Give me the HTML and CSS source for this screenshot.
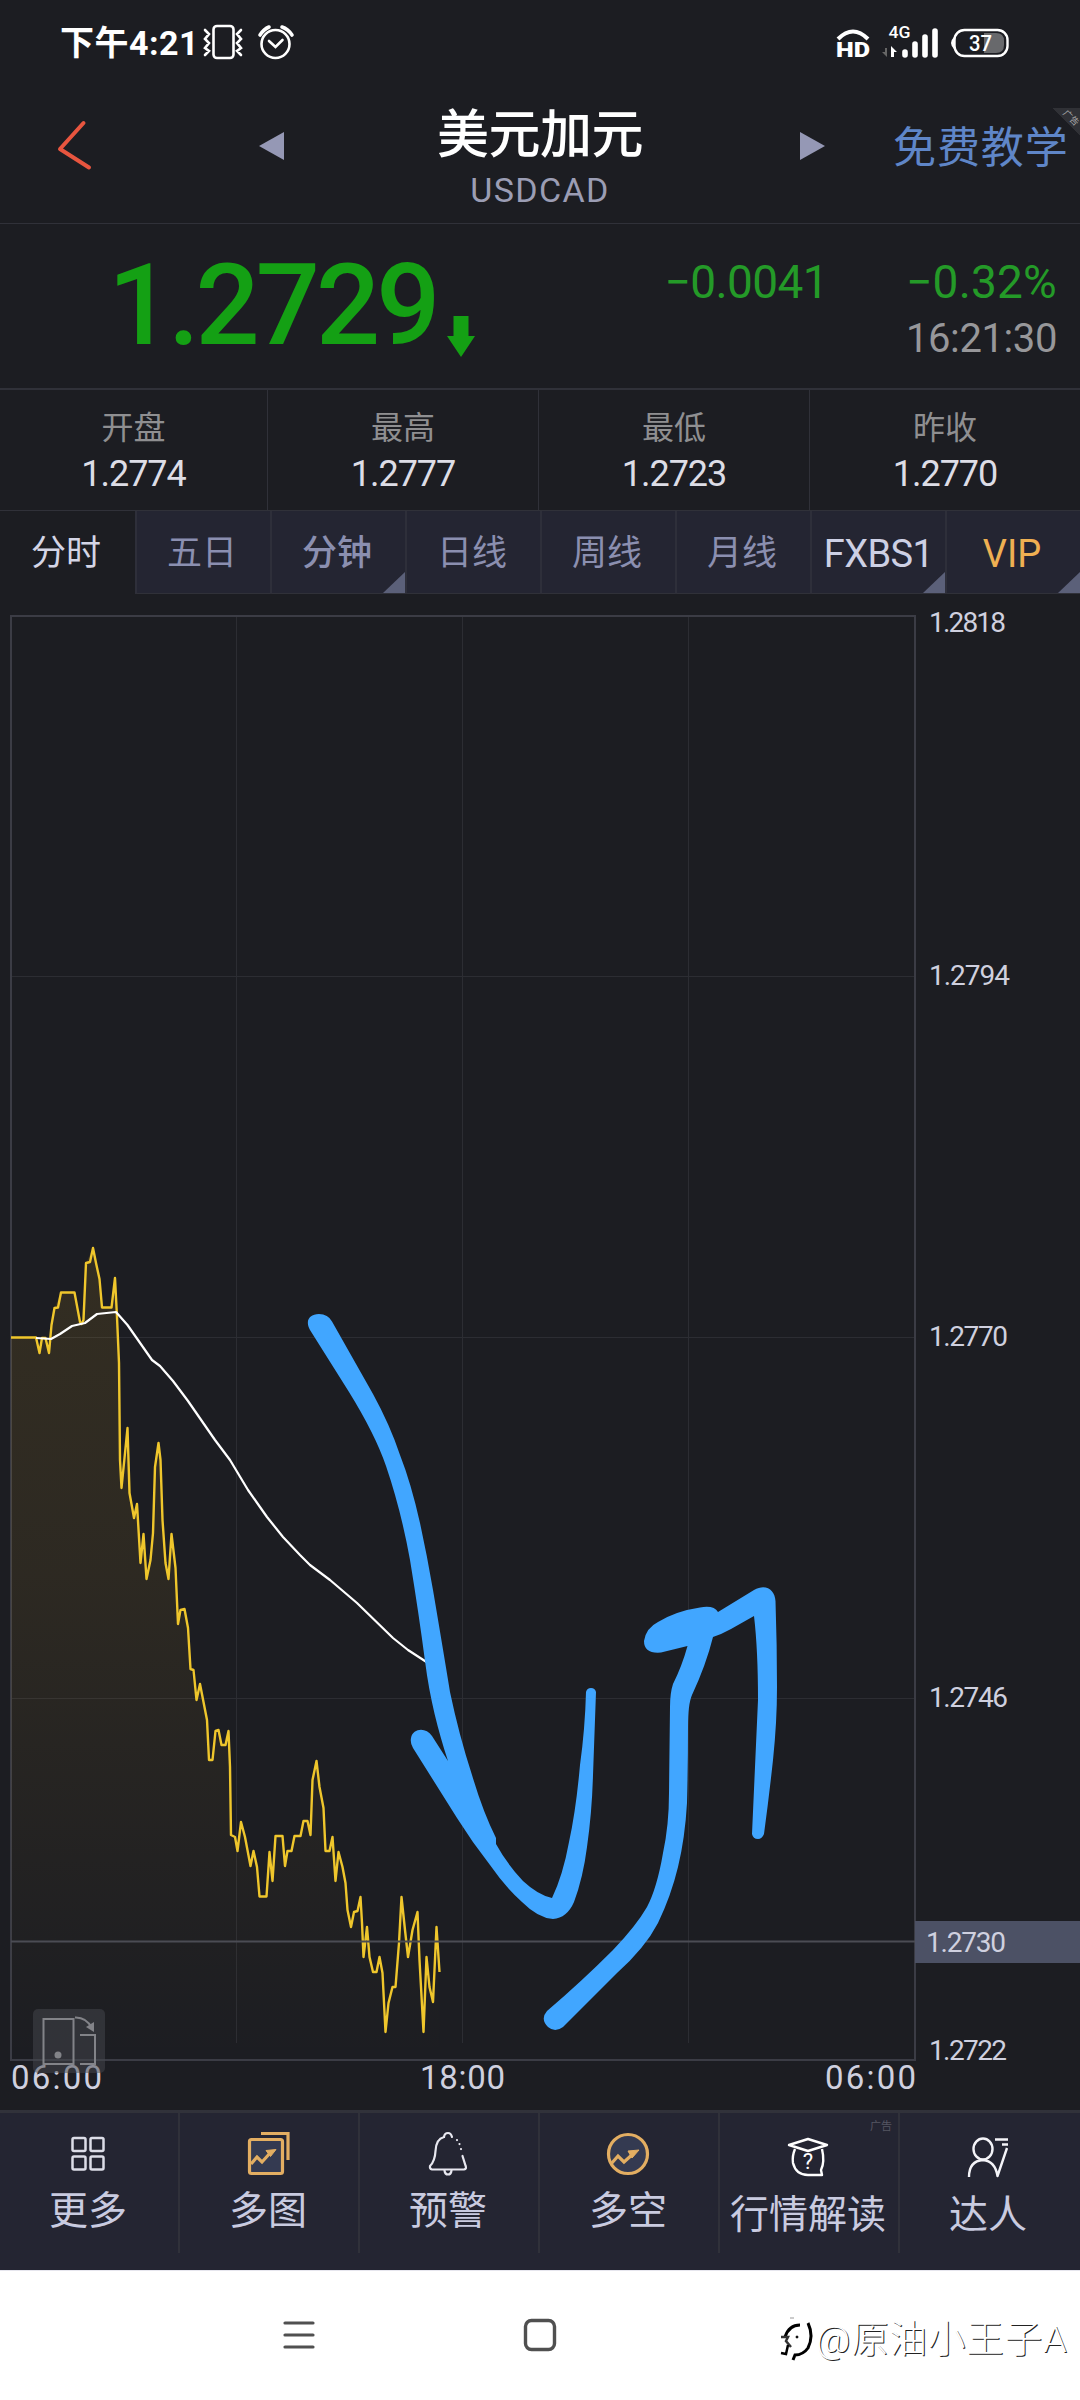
FILE: index.html
```html
<!DOCTYPE html>
<html lang="zh-CN">
<head>
<meta charset="utf-8">
<title>美元加元 USDCAD</title>
<link rel="stylesheet" href="styles.css">
</head>
<body>

<div class="status">
	<span class="clock">下午4:21</span>
	<svg class="status-left" width="94" height="40" viewBox="202 22 94 40">
		<g fill="none" stroke="#fff" stroke-width="2.6" stroke-linecap="round">
			<rect x="213.500" y="26" width="20" height="32" rx="3.500"/>
			<path d="M205 30l4 4-4 5 4 4-4 5 4 3-4 4M241 30l-4 4 4 5-4 4 4 5-4 3 4 4"/>
			<circle cx="275.500" cy="44" r="14"/>
			<path d="M269 41l6.500 6 7-7"/>
			<path d="M260 35q4-6 9-8M282 27q6 2 10 8" stroke-width="3.600"/>
		</g>
	</svg>
	<svg class="status-right" width="180" height="40" viewBox="834 22 180 40">
		<path d="M838 39q15-15 30 0" fill="none" stroke="#fff" stroke-width="4"/>
		<text x="836" y="57" class="hd" textLength="34" lengthAdjust="spacingAndGlyphs">HD</text>
		<text x="888.500" y="38" class="net" textLength="22" lengthAdjust="spacingAndGlyphs">4G</text>
		<path d="M887 48v9l-5-5h3v-4z" fill="#666"/>
		<path d="M891 57V46l6 6h-3v5z" fill="#fff"/>
		<path d="M905 52v3M915 44v11M925 37v18M935 31v24" stroke="#fff" stroke-width="5.600" stroke-linecap="round"/>
		<path d="M954 37q-6 6 0 12z" fill="#fff"/>
		<path d="M984 33h12q8 0 8 8v4q0 8-8 8h-12z" fill="#68696c"/>
		<rect x="954.500" y="30" width="53" height="26" rx="10" fill="none" stroke="#fff" stroke-width="2.400"/>
		<text x="969" y="51" class="bat" textLength="23" lengthAdjust="spacingAndGlyphs">37</text>
	</svg>
</div>

<div class="header">
	<svg class="back" width="40" height="60" viewBox="54 119 40 60">
		<path d="M83.500 128L60 154l29 18.500" transform="translate(0 -5)" fill="none" stroke="#e8553f" stroke-width="4" stroke-linecap="round" stroke-linejoin="round"/>
	</svg>
	<svg class="prev" width="26" height="30" viewBox="0 0 26 30"><path d="M0 15L25 1v28z" fill="#9598b5"/></svg>
	<div class="title">
		<div class="name">美元加元</div>
		<div class="code">USDCAD</div>
	</div>
	<svg class="next" width="26" height="30" viewBox="0 0 26 30"><path d="M25 15L0 1v28z" fill="#9598b5"/></svg>
	<div class="teach">免费教学</div>
	<div class="corner"><span>广告</span></div>
</div>

<div class="quote">
	<div class="price">1.2729</div>
	<svg class="down" width="28" height="41" viewBox="0 0 28 41"><path d="M6.500 0h15v20h6.500L14 41 0 20h6.500z" fill="#14a014"/></svg>
	<div class="diff">−0.0041</div>
	<div class="percent">
		<div class="rate">−0.32%</div>
		<div class="time">16:21:30</div>
	</div>
</div>

<div class="stats">
	<div class="stat"><span>开盘</span><b>1.2774</b></div>
	<div class="stat"><span>最高</span><b>1.2777</b></div>
	<div class="stat"><span>最低</span><b>1.2723</b></div>
	<div class="stat"><span>昨收</span><b>1.2770</b></div>
</div>

<div class="tabs">
	<div class="tab active">分时</div>
	<div class="tab">五日</div>
	<div class="tab bold more">分钟</div>
	<div class="tab">日线</div>
	<div class="tab">周线</div>
	<div class="tab">月线</div>
	<div class="tab light more">FXBS1</div>
	<div class="tab vip more">VIP</div>
</div>

<div class="chart">
<svg width="1080" height="1516" viewBox="0 594 1080 1516">
	<defs>
		<linearGradient id="area" gradientUnits="userSpaceOnUse" x1="0" y1="1248" x2="0" y2="2060">
			<stop offset="0" stop-color="#f0b420" stop-opacity=".11"/>
			<stop offset=".4" stop-color="#f0b420" stop-opacity=".08"/>
			<stop offset="1" stop-color="#f0b420" stop-opacity="0"/>
		</linearGradient>
	</defs>

	<!-- grid -->
	<path d="M236.500 617V2043M462.500 617V2043M688.500 617V2043M11 976.500H915M11 1337.500H915M11 1698.500H915" stroke="#2c2d33" fill="none"/>
	<rect x="11" y="616" width="904" height="1444" fill="none" stroke="#3b3c45" stroke-width="2"/>

	<!-- price area, price line and average line -->
	<path fill="url(#area)" d="M11 1337.500H36L39.500 1353 42 1338H45.500L49 1353 51.500 1325 54.500 1308 61 1292.500H74.500L81.500 1324 86 1263 93 1248 99.500 1279 102 1307.500H111.500L115 1278 119 1363 121.500 1488 127.500 1428 129.500 1493 134 1518 137 1504 140.500 1563 143.500 1534 146.500 1579 153 1533 155 1467 158.500 1443 162.500 1520 168.500 1579 171.500 1534 178 1624 184.500 1609 190.500 1669 196.500 1700 200 1684 207 1720 209 1760H212.500L215.500 1731 221.500 1745 228.500 1731 231 1833 237.500 1851 241 1822 250.500 1866 253.500 1851 259.500 1896H266.500L269.500 1852 272.500 1881 275.500 1836H282.500L285 1866 291.500 1851 294.500 1836H300.500L307.500 1821 310.500 1835 312.500 1780 316.500 1761 323.500 1808 325.500 1851 332.500 1837 335.500 1881 338.500 1852 345.500 1883 351 1927 360.500 1897 363.500 1957 367 1927 373 1972 379.500 1957 385.500 2032 392.500 1987 399 1943 401.500 1897 408 1957 417.500 1912 423.500 2032 426.500 1957 433 2002 436.500 1927 439.500 1972V2060H11z"/>
	<path class="price-line" d="M11 1337.500H36L39.500 1353 42 1338H45.500L49 1353 51.500 1325 54.500 1308 58 1307.500 61 1292.500H74.500L80 1322 81.500 1324 83.500 1320 86 1263 90 1262 93 1248 96 1263 99.500 1279 102 1307.500H111.500L115 1278 117 1317 119 1363 120 1460 121.500 1488 124.500 1458 127.500 1428 129.500 1493 134 1518 137 1504 140.500 1563 143.500 1534 146.500 1579 150.500 1560 153 1533 155 1467 158.500 1443 160.500 1460 162.500 1520 165.500 1563 168.500 1579 171.500 1534 175.500 1568 178 1624 180.500 1610 184.500 1609 188 1628 190.500 1669 193.500 1670 196.500 1700 200 1684 203.500 1702 207 1720 209 1760H212.500L215.500 1731 218.500 1730 221.500 1745H225.500L228.500 1731 230 1767 231 1835 235 1837 237.500 1851 241 1822 245 1837 250.500 1866 253.500 1851 257 1867 259.500 1896.500H266.500L269.500 1852 272.500 1881 275.500 1836H282.500L285 1866 287.500 1851H291.500L294.500 1836H300.500L303.500 1821H307.500L310.500 1835 312.500 1780 316.500 1761 319.500 1787 323.500 1808 325.500 1851H329.500L332.500 1837 335.500 1881 338.500 1852 342.500 1867 345.500 1883 347.500 1910 351 1927 354 1912 357.500 1911 360.500 1897 362 1923 363.500 1957 367 1927 369.500 1957 373 1972H376.500L379.500 1957 382.500 1973 385.500 2032 388.500 2003 392.500 1987H395.500L399 1943 401.500 1897 405 1930 408 1957 412.500 1930 417.500 1912 419.500 1960 423.500 2032 426.500 1957 429.500 1987 433 2002 436.500 1927 439.500 1972"/>
	<path class="avg-line" d="M36 1338L51 1339 60 1334 72 1326 85 1323 97 1314 116 1312 127.500 1325 152 1360 160 1366 173 1381 188 1401 215 1440 230 1460 248 1490 267 1517 283 1537 300 1555 310 1565 330 1580 357 1603 393 1638 408 1650 428 1663"/>
	<path d="M11 1941.500H915" stroke="#4b4c54" stroke-width="2"/>

	<!-- arrows drawn by hand -->
	<g fill="#41a6ff">
		<path d="M310 1330L349 1392Q375 1434 386 1466Q401 1510 410 1560Q419 1615 425 1661C430 1700 438 1730 448 1761L432 1736C426 1727 413 1728 411 1738Q410 1743 413 1748L457 1818Q472 1842 490 1865Q506 1888 522 1902Q538 1918 553 1919Q567 1918 574 1902Q583 1878 587 1847Q592 1812 593 1775L596 1692Q595 1688 591 1688Q587 1688 586 1692Q585 1729 580 1765Q576 1810 569 1842Q563 1875 552 1898Q538 1895 523 1881Q507 1864 496 1844L496 1838Q483 1812 472 1775Q459 1735 450 1692Q444 1655 433 1590Q427 1555 420 1523Q411 1483 400 1455Q390 1425 373 1394L332 1321.500Q328 1314 319 1314C309 1314 305 1321 310 1330z"/>
		<path d="M547 2011Q581 1982 613 1950Q636 1926 647 1907Q657 1888 663 1853Q669 1825 669 1793L670 1707Q670 1693 673 1684Q682 1666 687.500 1646L661 1652.500Q644 1654 644 1641Q646 1628 658 1622Q676 1611 700 1607.500Q714 1605 718 1612L754 1590C766 1583 775 1590 775.500 1601Q777 1645 777 1687Q777 1722 773 1760Q769 1797 764 1834Q762 1839 758 1839Q753 1839 752 1834L758 1700Q758 1650 754 1616L731 1629Q722 1634 713 1637Q706 1665 692 1695Q688 1704 688 1727Q688 1765 687 1803Q685 1838 678 1867Q671 1896 658 1923Q645 1948 617 1973L563 2027Q555 2033 548 2027Q540 2019 547 2011z"/>
	</g>

	<!-- price axis -->
	<rect x="915" y="1921" width="165" height="42" fill="#4c5165"/>
	<g class="axis">
		<text x="929" y="632" textLength="77">1.2818</text>
		<text x="929" y="985" textLength="81">1.2794</text>
		<text x="929" y="1346" textLength="79">1.2770</text>
		<text x="929" y="1707" textLength="79">1.2746</text>
		<text x="926" y="1952" textLength="80">1.2730</text>
		<text x="929" y="2060" textLength="78">1.2722</text>
	</g>

	<!-- time axis -->
	<g class="hours">
		<text x="11" y="2089" textLength="91">06:00</text>
		<text x="420" y="2089" textLength="85">18:00</text>
		<text x="825" y="2089" textLength="91">06:00</text>
	</g>

	<!-- rotate screen -->
	<rect x="33" y="2009" width="72" height="64" rx="5" fill="#46474d" fill-opacity=".5"/>
	<g fill="none" stroke="#828388" stroke-width="2">
		<rect x="43.500" y="2019" width="30" height="45"/>
		<path d="M80 2035H95V2064H80M75 2017.500Q86 2017 92 2028"/>
	</g>
	<path d="M86 2027l8-5v10z" fill="#828388"/>
	<circle cx="58" cy="2055" r="3.500" fill="#828388"/>
</svg>
</div>

<div class="toolbar">
	<div class="tool">
		<svg width="48" height="48" viewBox="0 0 48 48" fill="none" stroke="#dcdde8" stroke-width="2.500">
			<rect x="8.500" y="8" width="13" height="13" rx="1.500"/><rect x="26.500" y="8" width="13" height="13" rx="1.500"/>
			<rect x="8.500" y="26.500" width="13" height="13" rx="1.500"/><rect x="26.500" y="26.500" width="13" height="13" rx="1.500"/>
		</svg>
		<span>更多</span>
	</div>
	<div class="tool">
		<svg width="48" height="48" viewBox="0 0 48 48" fill="none" stroke="#e3ae62" stroke-width="3.200">
			<rect x="5.500" y="9.500" width="33" height="34" rx="2" fill="#343a51"/>
			<path d="M17 3.500H44V30M7 34l6-7 5 5 9-10"/><path d="M22 20.500l10-1-5.500 7z" fill="#e3ae62" stroke-width="1"/>
		</svg>
		<span>多图</span>
	</div>
	<div class="tool">
		<svg width="48" height="48" viewBox="0 0 48 48" fill="none" stroke="#e8e8f0" stroke-width="2.200" stroke-linecap="round">
			<path d="M28 7Q27 3 24 3Q20.500 3 20 7Q12 9 11.500 21Q11 31 6 36Q5.500 39 8 39.500H40Q43 39 41.500 35.500L38.500 26"/>
			<path d="M33 10v.1M35.500 14v.1M37 19v.1M20.500 40.500Q21 44.500 24 44.500T27.500 40.500"/>
		</svg>
		<span>预警</span>
	</div>
	<div class="tool">
		<svg width="48" height="48" viewBox="0 0 48 48" fill="none" stroke="#e3ae62" stroke-width="3.200">
			<circle cx="24" cy="24" r="19.500" fill="#343a51"/>
			<path d="M7 34l7-8 6 6 10-9"/><path d="M24 21l11-1-7 8z" fill="#e3ae62" stroke-width="1"/>
		</svg>
		<span>多空</span>
	</div>
	<div class="tool low">
		<svg width="48" height="48" viewBox="0 0 48 48" fill="none" stroke="#fff" stroke-width="2.400" stroke-linejoin="round">
			<path d="M24 5L43 11 24 17 5 11zM11 15Q8 22 9 29Q12 41 24 41H38L37 36Q41 28 38 15"/>
			<text x="24" y="35" text-anchor="middle" class="ask">?</text>
		</svg>
		<span>行情解读</span>
		<em class="ad">广告</em>
	</div>
	<div class="tool low">
		<svg width="48" height="48" viewBox="0 0 48 48" fill="none" stroke="#f4f4f8" stroke-width="2.400" stroke-linejoin="round">
			<ellipse cx="19" cy="15" rx="9.500" ry="10.500"/>
			<path d="M5 43Q5 27 19 26Q31 27 33.500 42L43 14M31 5.500H44M38 10.500H44"/>
		</svg>
		<span>达人</span>
	</div>
</div>

<div class="navbar">
	<svg class="menu" width="32" height="30" viewBox="0 0 32 30"><path d="M2 3H30M2 15H30M2 27H30" stroke="#505050" stroke-width="3.200" stroke-linecap="round"/></svg>
	<svg class="home" width="34" height="34" viewBox="0 0 34 34"><rect x="2.500" y="2.500" width="29" height="29" rx="6" fill="none" stroke="#505050" stroke-width="3.400"/></svg>
	<div class="mark">
		<svg width="36" height="46" viewBox="0 0 36 46" fill="none" stroke="#000">
			<path d="M5 21Q9 9 20 9" stroke-width="3"/>
			<path d="M28 7Q34 20 28 32Q23 39 15 39L13 44" stroke-width="3"/>
			<path d="M1 21h7l-2 4 5 6" stroke="#333" stroke-width="2.500"/><path d="M1 37l5 1 2-9" stroke-width="2.500"/>
			<path d="M10 2h4" stroke="#999"/><circle cx="17" cy="21" r="1" fill="#000"/>
		</svg>
		<span>@原油小王子A</span>
	</div>
</div>

</body>
</html>
```
FILE: styles.css
```css
* { box-sizing: border-box; }
body { margin: 0; width: 1080px; height: 2400px; overflow: hidden; background-color: #1c1d22; color: #d4d5e6; font-family: Roboto, "Noto Sans CJK SC", sans-serif; }
svg { display: block; flex: none; }

.status { display: flex; height: 84px; padding: 22px 66px 0 60px; }
.clock { width: 142px; line-height: 43px; font-size: 34px; font-weight: 700; letter-spacing: 0.5px; color: #fff; white-space: nowrap; }
.status-right { margin-left: auto; }
.hd { font-size: 21px; font-weight: 900; fill: #fff; }
.net { font-size: 16px; font-weight: 500; fill: #fff; }
.bat { font-size: 22px; font-weight: 500; fill: #fff; }

.header { position: relative; display: flex; height: 140px; border-bottom: 1px solid #303139; }
.back { margin: 35px 0 0 54px; }
.prev { margin: 47px 0 0 165px; }
.title { width: 512px; padding-right: 2px; text-align: center; }
.name { margin-top: 20px; height: 64px; line-height: 64px; font-size: 52px; font-weight: 500; letter-spacing: -0.5px; color: #fff; }
.code { margin-top: 2px; height: 40px; line-height: 40px; font-size: 34px; color: #9b9db4; letter-spacing: 1.4px; }
.next { margin: 47px 0 0 3px; }
.teach { margin: 34px 0 0 67px; height: 60px; line-height: 60px; font-size: 43px; letter-spacing: 0.9px; color: #5f86c8; white-space: nowrap; }
.corner { position: absolute; right: 0; top: 24px; width: 28px; height: 28px; background: linear-gradient(to top right, transparent 50%, #303136 50%); }
.corner span { position: absolute; right: 0; top: 4px; font-size: 9px; line-height: 12px; white-space: nowrap; color: #aaa; transform: rotate(45deg); }

.quote { display: flex; height: 166px; color: #14a014; border-bottom: 2px solid #303139; }
.price { width: 339px; margin-left: 108px; line-height: 163px; font-size: 113px; font-weight: 500; letter-spacing: -4px; }
.down { margin-top: 92px; }
.diff { width: 353px; margin-top: 33px; text-align: right; line-height: 50px; font-size: 46px; color: #249a28; letter-spacing: -0.6px; }
.percent { margin-left: auto; padding: 33px 23px 0 0; text-align: right; }
.rate { line-height: 50px; font-size: 46px; color: #249a28; letter-spacing: 0.2px; }
.time { margin-top: 7px; line-height: 50px; font-size: 40px; color: #97979a; letter-spacing: -0.4px; }

.stats { display: flex; height: 121px; }
.stat { flex: 1; padding-top: 15px; text-align: center; border-right: 1px solid #303139; border-bottom: 1px solid #303139; }
.stat:first-child { flex: none; width: 268px; }
.stat:last-child { border-right: none; }
.stat span { display: block; height: 46px; line-height: 46px; font-size: 32px; color: #8f8f91; }
.stat b { display: block; height: 46px; line-height: 46px; font-size: 36px; font-weight: 400; letter-spacing: -1px; color: #dddde6; }

.tabs { display: flex; height: 83px; }
.tab { position: relative; width: 135px; padding-right: 3px; text-align: center; line-height: 86px; font-size: 35px; color: #8b8fb0; background-color: #242532; border-left: 2px solid #2e2f3a; border-bottom: 1px solid #303139; }
.tab.active { color: #d4d5e6; background: none; border: none; }
.tab.bold { font-weight: 500; }
.tab.light { color: #cdd0e4; font-size: 38px; letter-spacing: -0.6px; padding-right: 0; }
.tab.vip { color: #efb052; font-size: 38px; }
.tab.more:after { content: ""; position: absolute; right: 0; bottom: 0; border-left: 22px solid transparent; border-bottom: 21px solid #5b6079; }

.chart { height: 1516px; }
.price-line { fill: none; stroke: #efc62c; stroke-width: 2.4; stroke-linejoin: round; }
.avg-line { fill: none; stroke: #fff; stroke-width: 2.2; stroke-linejoin: round; }
.axis text { font-size: 28px; fill: #cfd0df; }
.hours text { font-size: 33px; fill: #cfd0df; }

.toolbar { display: flex; height: 160px; background-color: #242532; border-top: 3px solid #31323a; }
.tool { position: relative; display: flex; flex-direction: column; align-items: center; width: 180px; padding: 17px 4px 0 0; color: #c9cbe0; }
.tool:not(:last-child):after { content: ""; position: absolute; right: 0; top: 0; width: 2px; height: 140px; background-color: #30313a; }
.tool span { margin-top: 6px; height: 54px; line-height: 54px; font-size: 39px; white-space: nowrap; }
.tool.low { padding-top: 21px; }
.ask { font-size: 22px; fill: #fff; stroke: none; }
.ad { position: absolute; right: 8px; top: 7px; font-size: 11px; line-height: 14px; font-style: normal; color: #565763; }

.navbar { display: flex; height: 130px; background-color: #fff; border-top: 1px solid #e6e6ee; }
.menu { margin: 49px 0 0 283px; }
.home { margin: 47px 0 0 208px; }
.mark { display: flex; margin: 45px 0 0 223px; }
.mark span { line-height: 46px; font-size: 37.5px; font-weight: 300; letter-spacing: 0.9px; color: #fff; text-shadow: 1px 1px 0 #222; white-space: nowrap; }
```
